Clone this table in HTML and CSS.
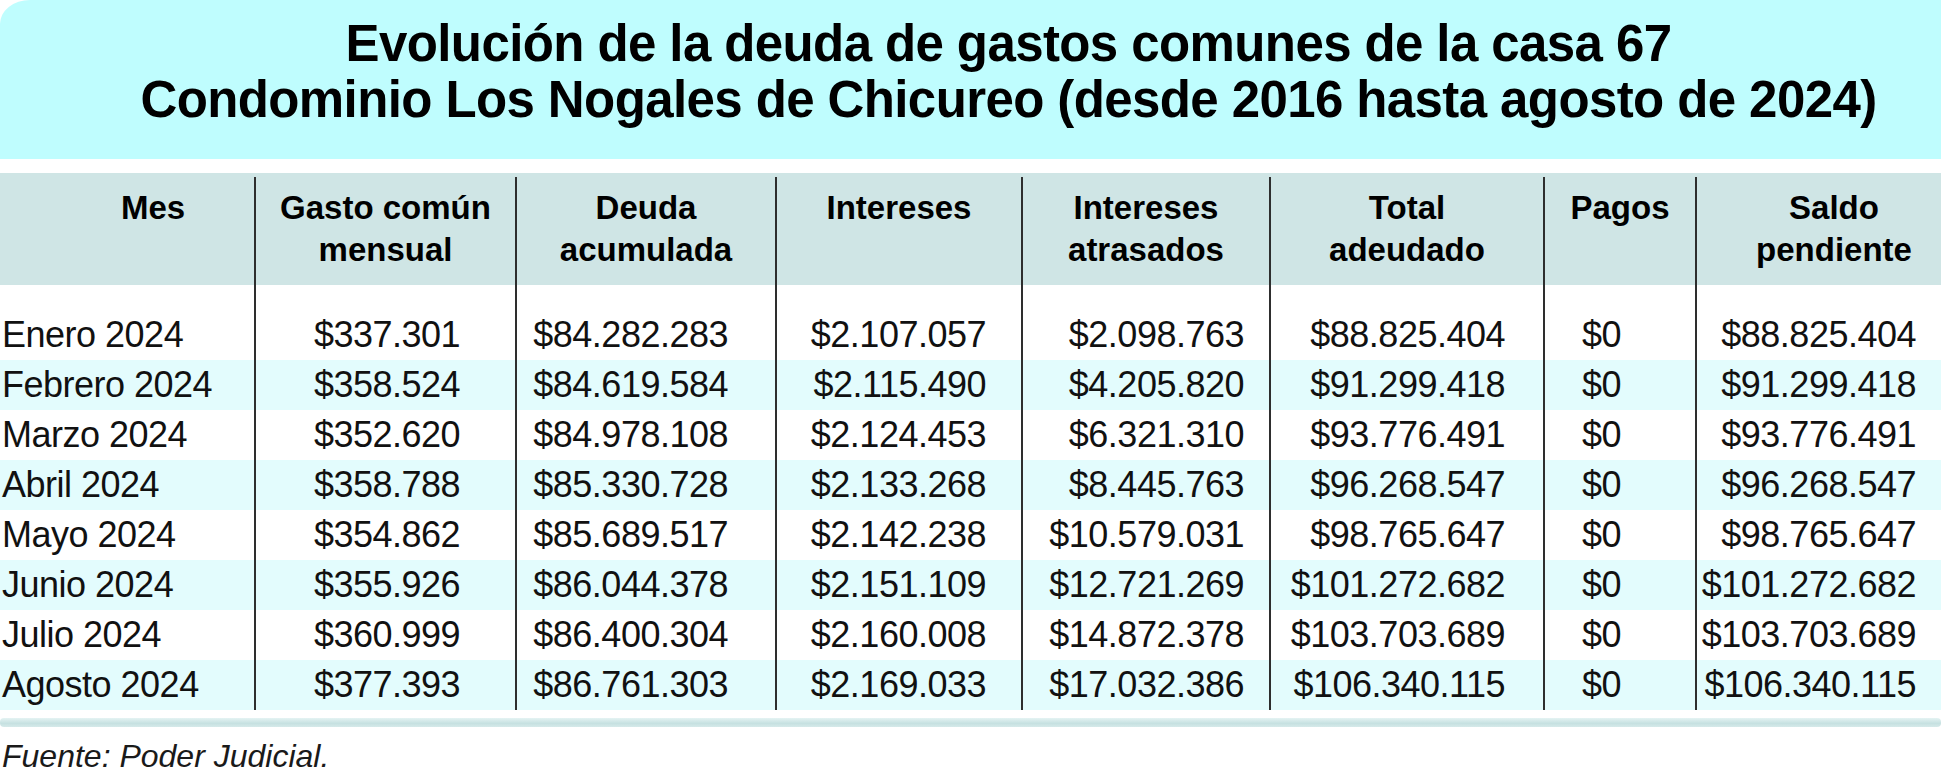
FILE: index.html
```html
<!DOCTYPE html>
<html lang="es">
<head>
<meta charset="utf-8">
<title>Evolución de la deuda de gastos comunes</title>
<link rel="stylesheet" href="styles.css">
</head>
<body>
<header class="banner">
  <h1 class="title">Evolución de la deuda de gastos comunes de la casa 67<br>Condominio Los Nogales de Chicureo (desde 2016 hasta agosto de 2024)</h1>
</header>

<section class="table">
  <div class="row head">
    <div class="cell c1">Mes</div>
    <div class="cell c2">Gasto común<br>mensual</div>
    <div class="cell c3">Deuda<br>acumulada</div>
    <div class="cell c4">Intereses</div>
    <div class="cell c5">Intereses<br>atrasados</div>
    <div class="cell c6">Total<br>adeudado</div>
    <div class="cell c7">Pagos</div>
    <div class="cell c8">Saldo<br>pendiente</div>
  </div>
  <div class="row spacer">
    <div class="cell c1"></div><div class="cell c2"></div><div class="cell c3"></div><div class="cell c4"></div>
    <div class="cell c5"></div><div class="cell c6"></div><div class="cell c7"></div><div class="cell c8"></div>
  </div>
  <div class="row body">
    <div class="cell c1">Enero 2024</div><div class="cell c2">$337.301</div><div class="cell c3">$84.282.283</div><div class="cell c4">$2.107.057</div>
    <div class="cell c5">$2.098.763</div><div class="cell c6">$88.825.404</div><div class="cell c7">$0</div><div class="cell c8">$88.825.404</div>
  </div>
  <div class="row body alt">
    <div class="cell c1">Febrero 2024</div><div class="cell c2">$358.524</div><div class="cell c3">$84.619.584</div><div class="cell c4">$2.115.490</div>
    <div class="cell c5">$4.205.820</div><div class="cell c6">$91.299.418</div><div class="cell c7">$0</div><div class="cell c8">$91.299.418</div>
  </div>
  <div class="row body">
    <div class="cell c1">Marzo 2024</div><div class="cell c2">$352.620</div><div class="cell c3">$84.978.108</div><div class="cell c4">$2.124.453</div>
    <div class="cell c5">$6.321.310</div><div class="cell c6">$93.776.491</div><div class="cell c7">$0</div><div class="cell c8">$93.776.491</div>
  </div>
  <div class="row body alt">
    <div class="cell c1">Abril 2024</div><div class="cell c2">$358.788</div><div class="cell c3">$85.330.728</div><div class="cell c4">$2.133.268</div>
    <div class="cell c5">$8.445.763</div><div class="cell c6">$96.268.547</div><div class="cell c7">$0</div><div class="cell c8">$96.268.547</div>
  </div>
  <div class="row body">
    <div class="cell c1">Mayo 2024</div><div class="cell c2">$354.862</div><div class="cell c3">$85.689.517</div><div class="cell c4">$2.142.238</div>
    <div class="cell c5">$10.579.031</div><div class="cell c6">$98.765.647</div><div class="cell c7">$0</div><div class="cell c8">$98.765.647</div>
  </div>
  <div class="row body alt">
    <div class="cell c1">Junio 2024</div><div class="cell c2">$355.926</div><div class="cell c3">$86.044.378</div><div class="cell c4">$2.151.109</div>
    <div class="cell c5">$12.721.269</div><div class="cell c6">$101.272.682</div><div class="cell c7">$0</div><div class="cell c8">$101.272.682</div>
  </div>
  <div class="row body">
    <div class="cell c1">Julio 2024</div><div class="cell c2">$360.999</div><div class="cell c3">$86.400.304</div><div class="cell c4">$2.160.008</div>
    <div class="cell c5">$14.872.378</div><div class="cell c6">$103.703.689</div><div class="cell c7">$0</div><div class="cell c8">$103.703.689</div>
  </div>
  <div class="row body alt">
    <div class="cell c1">Agosto 2024</div><div class="cell c2">$377.393</div><div class="cell c3">$86.761.303</div><div class="cell c4">$2.169.033</div>
    <div class="cell c5">$17.032.386</div><div class="cell c6">$106.340.115</div><div class="cell c7">$0</div><div class="cell c8">$106.340.115</div>
  </div>
</section>

<div class="rule"></div>
<p class="source">Fuente: Poder Judicial.</p>
</body>
</html>
```

FILE: styles.css
```css
html, body {
  margin: 0;
  padding: 0;
  background: #ffffff;
}

body {
  width: 1941px;
  font-family: "Liberation Sans", Arial, sans-serif;
  color: #111111;
}

.banner {
  background: #bffdfe;
  border-top-left-radius: 30px 24px;
  height: 159px;
  box-sizing: border-box;
  padding: 16px 0 0 76px;
}

.title {
  margin: 0;
  font-size: 51px;
  line-height: 56px;
  font-weight: 700;
  text-align: center;
  color: #000000;
  letter-spacing: -0.6px;
}

.table {
  margin-top: 14px;
}

.row {
  display: grid;
  grid-template-columns: 254px 261px 260px 246px 248px 274px 152px 246px;
}

.cell {
  box-sizing: border-box;
  white-space: nowrap;
}

.cell.c2, .cell.c3, .cell.c4, .cell.c5, .cell.c6, .cell.c7, .cell.c8 {
  border-left: 2px solid #2e2e2e;
}

.row.head {
  background: #cfe5e5;
  height: 112px;
  padding-top: 4px;
  box-sizing: border-box;
}

.head .cell {
  font-weight: 700;
  font-size: 33px;
  line-height: 42px;
  text-align: center;
  color: #000000;
  padding-top: 10px;
}

.head .c1 { padding-left: 52px; }
.head .c8 { padding-left: 30px; }

.row.spacer {
  height: 25px;
}

.row.body {
  height: 50px;
}

.row.alt {
  background: #e3fcfd;
}

.body .cell {
  font-size: 36px;
  line-height: 50px;
  letter-spacing: -0.5px;
  text-align: right;
}

.body .c1 { text-align: left; padding-left: 2px; }
.body .c2 { text-align: center; padding-left: 3px; }
.body .c3 { padding-right: 47px; }
.body .c4 { padding-right: 35px; }
.body .c5 { padding-right: 25px; }
.body .c6 { padding-right: 38px; }
.body .c7 { text-align: left; padding-left: 37px; }
.body .c8 { padding-right: 25px; }

.rule {
  margin-top: 8px;
  height: 9px;
  background: linear-gradient(#e4f3f3, #c6e1e1 60%, #d6eaea);
  border-radius: 4px;
}

.source {
  margin: 11px 0 0 2px;
  font-style: italic;
  font-size: 32px;
  line-height: 36px;
  color: #1a1a1a;
}
```
